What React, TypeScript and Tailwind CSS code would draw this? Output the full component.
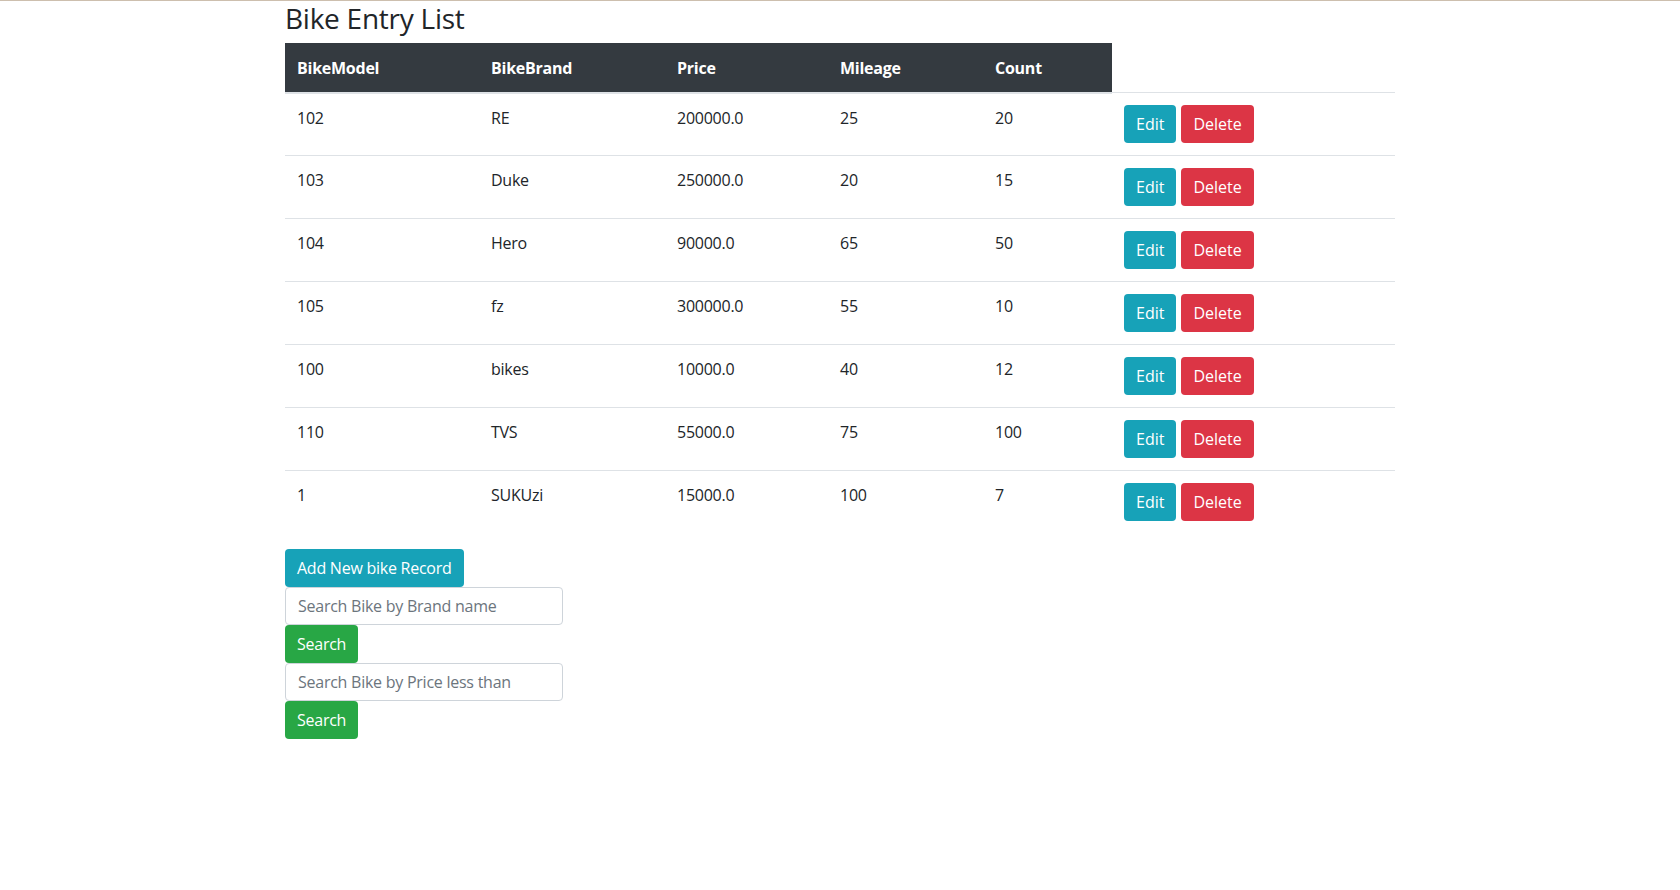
import React from 'react';

const bikes = [
  { model: '102', brand: 'RE', price: '200000.0', mileage: '25', count: '20' },
  { model: '103', brand: 'Duke', price: '250000.0', mileage: '20', count: '15' },
  { model: '104', brand: 'Hero', price: '90000.0', mileage: '65', count: '50' },
  { model: '105', brand: 'fz', price: '300000.0', mileage: '55', count: '10' },
  { model: '100', brand: 'bikes', price: '10000.0', mileage: '40', count: '12' },
  { model: '110', brand: 'TVS', price: '55000.0', mileage: '75', count: '100' },
  { model: '1', brand: 'SUKUzi', price: '15000.0', mileage: '100', count: '7' },
];

const headers = [
  { label: 'BikeModel', w: 'w-[194px]' },
  { label: 'BikeBrand', w: 'w-[186px]' },
  { label: 'Price', w: 'w-[163px]' },
  { label: 'Mileage', w: 'w-[155px]' },
  { label: 'Count', w: 'w-[129px]' },
];

export default function App() {
  return (
    <div className="min-h-screen bg-white text-[#212529] text-base leading-6 tracking-[-0.25px] font-['Open_Sans','Noto_Sans',sans-serif]">
      <div className="h-px bg-[#cdbfae]" />
      <div className="w-[1140px] mx-auto px-[15px] pt-px">
        <h3 className="text-[28px] leading-[1.2] font-medium mb-[7px]">Bike Entry List</h3>

        <table className="w-full border-collapse table-fixed mb-4">
          <thead>
            <tr>
              {headers.map((h) => (
                <th
                  key={h.label}
                  className={`${h.w} bg-[#343a40] text-white font-bold text-left align-bottom px-3 pt-[13px] pb-3 border-b-2 border-[#dee2e6]`}
                >
                  {h.label}
                </th>
              ))}
            </tr>
          </thead>
          <tbody>
            {bikes.map((b, i) => (
              <tr key={i}>
                <td className="align-top p-3 border-t border-[#dee2e6]">{b.model}</td>
                <td className="align-top p-3 border-t border-[#dee2e6]">{b.brand}</td>
                <td className="align-top p-3 border-t border-[#dee2e6]">{b.price}</td>
                <td className="align-top p-3 border-t border-[#dee2e6]">{b.mileage}</td>
                <td className="align-top p-3 border-t border-[#dee2e6]">{b.count}</td>
                <td className="align-top p-3 border-t border-[#dee2e6]">
                  <div className="flex gap-[5px] tracking-normal">
                    <button className="h-[38px] px-3 rounded bg-[#17a2b8] text-white">Edit</button>
                    <button className="h-[38px] px-3 rounded bg-[#dc3545] text-white">Delete</button>
                  </div>
                </td>
              </tr>
            ))}
          </tbody>
        </table>

        <div className="flex flex-col items-start">
          <button className="h-[38px] px-3 rounded bg-[#17a2b8] text-white">Add New bike Record</button>
          <input
            className="w-[278px] h-[38px] px-3 border border-[#ced4da] rounded outline-none placeholder:text-[#6c757d]"
            placeholder="Search Bike by Brand name"
          />
          <button className="h-[38px] px-3 rounded bg-[#28a745] text-white">Search</button>
          <input
            className="w-[278px] h-[38px] px-3 border border-[#ced4da] rounded outline-none placeholder:text-[#6c757d]"
            placeholder="Search Bike by Price less than"
          />
          <button className="h-[38px] px-3 rounded bg-[#28a745] text-white">Search</button>
        </div>
      </div>
    </div>
  );
}
